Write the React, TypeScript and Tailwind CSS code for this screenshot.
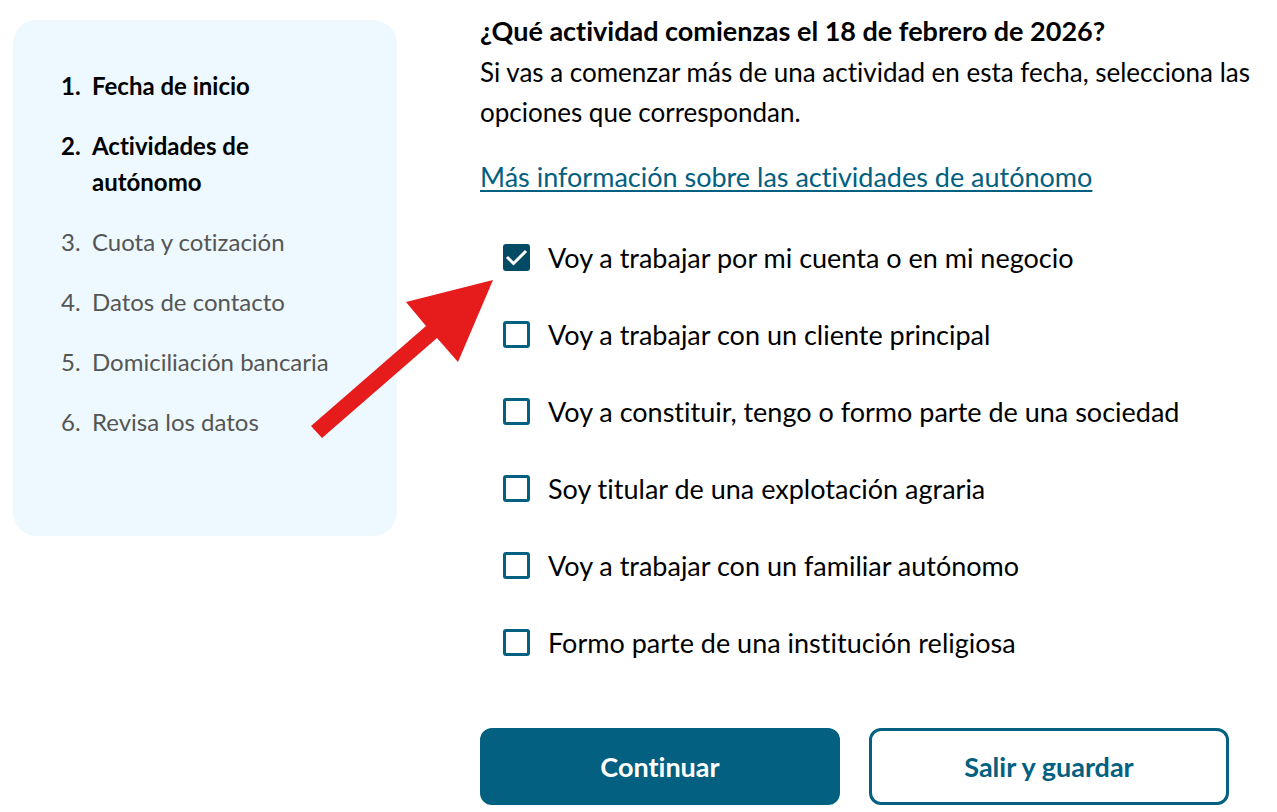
const steps = [
  "Fecha de inicio",
  "Actividades de autónomo",
  "Cuota y cotización",
  "Datos de contacto",
  "Domiciliación bancaria",
  "Revisa los datos",
];

const currentStep = 2;

const activities = [
  { id: "negocio", label: "Voy a trabajar por mi cuenta o en mi negocio", checked: true },
  { id: "cliente", label: "Voy a trabajar con un cliente principal" },
  { id: "sociedad", label: "Voy a constituir, tengo o formo parte de una sociedad" },
  { id: "agraria", label: "Soy titular de una explotación agraria" },
  { id: "familiar", label: "Voy a trabajar con un familiar autónomo" },
  { id: "religiosa", label: "Formo parte de una institución religiosa" },
];

function Steps() {
  return (
    <aside className="w-96 shrink-0 rounded-3xl bg-[#edf9fe] px-12 pt-12 pb-24">
      <ol className="flex flex-col gap-6 text-2xl leading-9">
        {steps.map((step, i) => (
          <li
            key={step}
            className={i < currentStep ? "flex font-bold text-black" : "flex text-[#555]"}
          >
            <span className="w-[31px] shrink-0">{i + 1}.</span>
            <span className={i < currentStep ? "max-w-44" : ""}>{step}</span>
          </li>
        ))}
      </ol>
    </aside>
  );
}

function Activity({ id, label, checked }: { id: string; label: string; checked?: boolean }) {
  return (
    <div className="flex items-center gap-[18px]">
      <div className="relative mb-0.5 flex shrink-0">
        <input
          id={id}
          type="checkbox"
          defaultChecked={checked}
          className="peer size-[27px] appearance-none rounded-[3px] border-3 border-[#036080] bg-white checked:border-[#034b64] checked:bg-[#034b64]"
        />
        <svg
          viewBox="0 0 27 27"
          fill="none"
          stroke="white"
          strokeWidth="3"
          className="pointer-events-none absolute inset-0 hidden size-[27px] peer-checked:block"
        >
          <path d="M4 13 10.5 19.5 23 7" />
        </svg>
      </div>
      <label htmlFor={id}>{label}</label>
    </div>
  );
}

export default function App() {
  return (
    <div className="relative flex items-start bg-white pt-5 pl-[13px] font-['Lato',sans-serif] text-black [font-variant-ligatures:none]">
      <Steps />
      <main className="-mt-[9px] ml-[83px] min-w-0 flex-1 text-[27px] leading-10">
        <h1 className="font-bold">¿Qué actividad comienzas el 18 de febrero de 2026?</h1>
        <p className="mt-px text-[26px]">
          Si vas a comenzar más de una actividad en esta fecha, selecciona las opciones que
          correspondan.
        </p>
        <a
          href="#info"
          className="mt-[25px] inline-block text-[#036080] underline decoration-2 underline-offset-3"
        >
          Más información sobre las actividades de autónomo
        </a>
        <div className="mt-[41px] ml-[23px] flex flex-col gap-[37px]">
          {activities.map((a) => (
            <Activity key={a.id} {...a} />
          ))}
        </div>
        <div className="mt-[65px] mr-12 grid grid-cols-2 gap-[29px] font-bold">
          <button className="h-[77px] rounded-xl bg-[#036080] text-white">Continuar</button>
          <button className="h-[77px] rounded-xl border-3 border-[#036080] bg-white text-[#036080]">
            Salir y guardar
          </button>
        </div>
      </main>
      <svg
        viewBox="0 0 190 164"
        className="pointer-events-none absolute top-[277px] left-[307px] h-[164px] w-[190px] fill-[#e61c1c]"
        aria-hidden="true"
      >
        <path d="M186 3 99 25 119 49 4 149 15 161 130 61 151 85Z" />
      </svg>
    </div>
  );
}
